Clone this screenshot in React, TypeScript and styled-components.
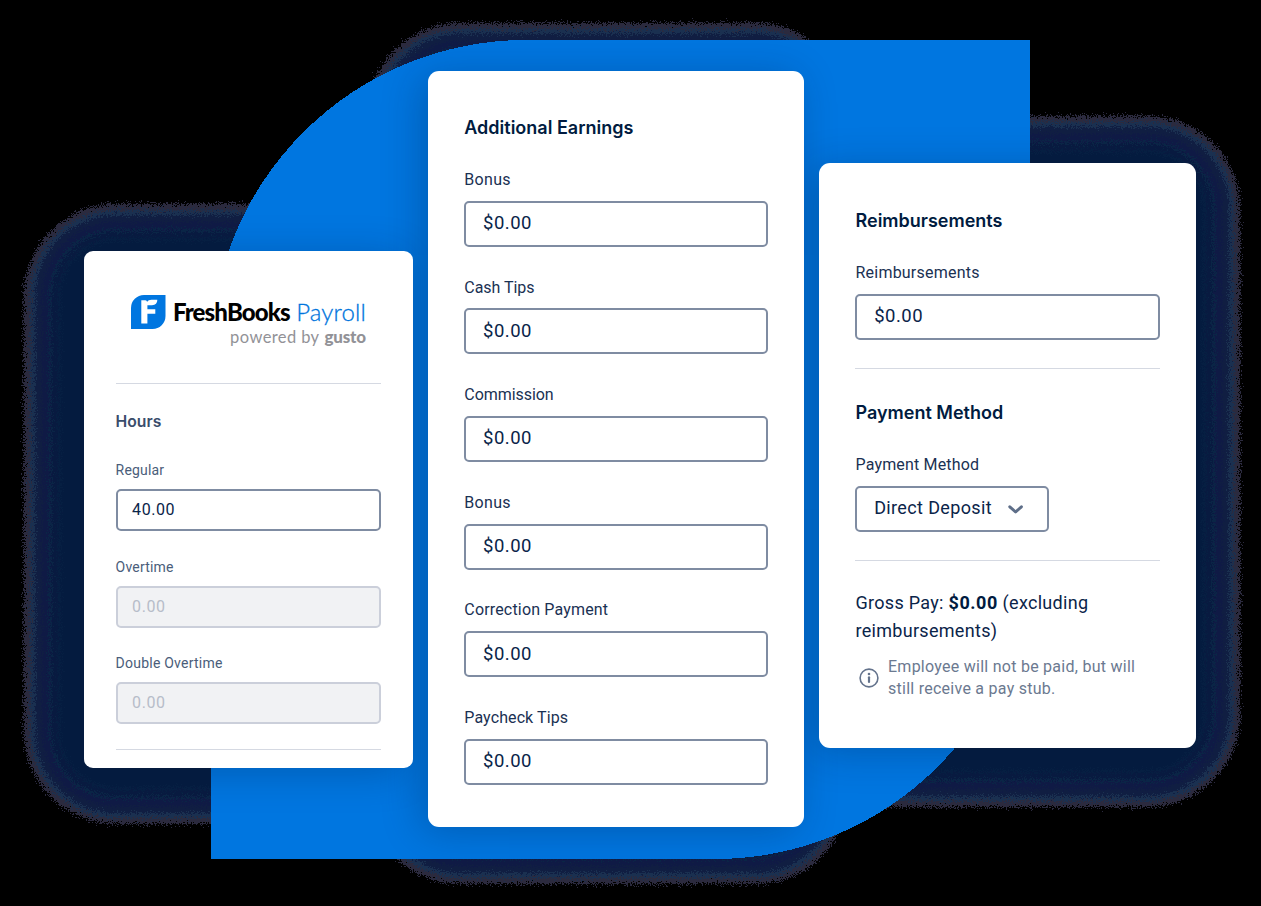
import React from 'react';
import styled, { createGlobalStyle, css } from 'styled-components';

const GlobalStyle = createGlobalStyle`
  *, *::before, *::after { box-sizing: border-box; }
  html, body { margin: 0; padding: 0; background: #000; overflow: hidden; }
`;

const Stage = styled.main`
  position: relative;
  width: 1261px;
  height: 906px;
  overflow: hidden;
  background: #000;
  font-family: Roboto, "Liberation Sans", sans-serif;
  color: #001b40;
`;

const BackdropSvg = styled.svg`
  position: absolute;
  inset: 0;
`;

const Columns = styled.div`
  position: relative;
  display: flex;
  align-items: flex-start;
  gap: 15.5px;
  padding-left: 84px;
`;

const Card = styled.section<{ $w: number; $h: number; $top: number; $pad: string; $radius: number }>`
  display: flex;
  flex-direction: column;
  flex: none;
  width: ${p => p.$w}px;
  height: ${p => p.$h}px;
  margin-top: ${p => p.$top}px;
  padding: ${p => p.$pad};
  border-radius: ${p => p.$radius}px;
  background: #fff;
`;

const Heading = styled.h2<{ $small?: boolean }>`
  margin: 0;
  height: 24px;
  padding-top: 1px;
  font: 600 ${p => (p.$small ? '15.7px' : '18px')} / 24px Inter, sans-serif;
  color: ${p => (p.$small ? '#3a4d6b' : '#001b40')};
`;

const Fields = styled.div<{ $gap: number; $top: number }>`
  display: flex;
  flex-direction: column;
  gap: ${p => p.$gap}px;
  margin-top: ${p => p.$top}px;
`;

const FieldBox = styled.label`
  display: flex;
  flex-direction: column;
`;

const Caption = styled.span<{ $small?: boolean; $track?: number }>`
  height: 20px;
  font-size: ${p => (p.$small ? 14 : 16)}px;
  line-height: 20px;
  letter-spacing: ${p => p.$track ?? 0.17}px;
  color: ${p => (p.$small ? '#4a5d7a' : '#1a3153')};
  white-space: nowrap;
`;

const Control = styled.span<{ $small?: boolean; $disabled?: boolean; $w?: number }>`
  display: flex;
  align-items: center;
  width: ${p => (p.$w ? `${p.$w}px` : '100%')};
  height: 46px;
  margin-top: 10.8px;
  padding: 0 0 1px 16.7px;
  border: 2px solid #7f8ca2;
  border-radius: 5px;
  background: #fff;
  color: #0a2449;
  font-size: 18.5px;
  line-height: 24px;
  letter-spacing: 0.5px;
  ${p => p.$small && css`
    height: 42px;
    margin-top: 9px;
    padding: 0 0 0 14.5px;
    font-size: 16px;
    letter-spacing: 0.55px;
  `}
  ${p => p.$disabled && css`
    border-color: #cbcfda;
    background: #f1f2f4;
    color: #b7bdc9;
  `}
`;

const SelectText = styled.span`
  width: 133px;
  font-size: 18px;
  letter-spacing: 0.36px;
`;

const Divider = styled.hr<{ $top: number }>`
  flex: none;
  width: 100%;
  height: 1px;
  margin: ${p => p.$top}px 0 0;
  border: 0;
  background: #d5d9e2;
`;

const Brand = styled.header`
  display: flex;
  justify-content: center;
  gap: 7px;
  height: 60px;
  padding-left: 0.5px;
`;

const BrandText = styled.div`
  display: flex;
  flex-direction: column;
  width: 193px;
`;

const BrandName = styled.div`
  display: flex;
  justify-content: space-between;
  height: 32px;
  font: 900 24px/34px Lato, sans-serif;
  letter-spacing: -0.85px;
  color: #000;
  white-space: nowrap;
`;

const Product = styled.span`
  font-weight: 300;
  letter-spacing: 0.15px;
  color: #0075dd;
  -webkit-text-stroke: 0.3px #0075dd;
`;

const Powered = styled.div`
  display: flex;
  justify-content: flex-end;
  gap: 5px;
  height: 20px;
  font: 400 16.5px/20px Lato, sans-serif;
  letter-spacing: 0.4px;
  color: #929297;
  white-space: nowrap;
`;

const Partner = styled.b`
  font-size: 17px;
  font-weight: 900;
  letter-spacing: -0.2px;
`;

const Gross = styled.p`
  margin: 28px 0 0;
  font-size: 18px;
  line-height: 28px;
  letter-spacing: 0.3px;
  color: #0a2449;
`;

const Amount = styled.b`
  font-weight: 700;
  letter-spacing: 0.55px;
  color: #001b40;
`;

const Note = styled.div`
  display: flex;
  align-items: center;
  gap: 9px;
  margin-top: 11px;
  padding-left: 3.5px;
  font-size: 16px;
  line-height: 22px;
  letter-spacing: 0.26px;
  color: #6b7990;
  white-space: nowrap;
`;

const halos = [
  { x: 24, y: 204, w: 372, h: 620 },
  { x: 368, y: 23, w: 480, h: 861 },
  { x: 760, y: 116, w: 480, h: 691 },
];

const haloBands = [
  [0, '#2b2a3e'], [6, '#1a3050'], [11, '#101e42'], [18, '#0f1a45'],
  [25, '#0a2546'], [28, '#081a40'], [34, '#061f42'], [37, '#041b3f'],
] as const;

const shadows = [
  { x: 84, y: 251, w: 328.7, h: 516.5 },
  { x: 428.2, y: 71, w: 375.7, h: 755.5 },
  { x: 819.4, y: 163.3, w: 376.2, h: 584.4 },
];

const blob = 'M526 40H1030V544A315 315 0 0 1 715 859H211V355A315 315 0 0 1 526 40Z';

function Backdrop() {
  return (
    <BackdropSvg width="1261" height="906" viewBox="0 0 1261 906" aria-hidden="true">
      <defs>
        <filter id="grain" filterUnits="userSpaceOnUse" x="0" y="0" width="1261" height="906" colorInterpolationFilters="sRGB">
          <feTurbulence type="fractalNoise" baseFrequency="0.8" numOctaves="2" seed="4" result="n" />
          <feDisplacementMap in="SourceGraphic" in2="n" scale="15" xChannelSelector="R" yChannelSelector="G" />
        </filter>
        <filter id="soft" filterUnits="userSpaceOnUse" x="-100" y="-100" width="1461" height="1106" colorInterpolationFilters="sRGB">
          <feGaussianBlur stdDeviation="20" />
        </filter>
        <clipPath id="blobClip"><path d={blob} /></clipPath>
      </defs>
      <g filter="url(#grain)" shapeRendering="crispEdges">
        {haloBands.map(([inset, fill]) =>
          halos.map(h => (
            <rect key={`${inset}-${h.x}`} x={h.x + inset} y={h.y + inset} width={h.w - inset * 2}
              height={h.h - inset * 2} rx={92 - inset} fill={fill} />
          )),
        )}
      </g>
      <path d={blob} fill="#0076e0" shapeRendering="crispEdges" />
      <g clipPath="url(#blobClip)">
        {shadows.map(s => (
          <rect key={s.x} x={s.x - 7} y={s.y + 5} width={s.w} height={s.h} rx="12"
            fill="#001b40" opacity="0.27" filter="url(#soft)" />
        ))}
      </g>
    </BackdropSvg>
  );
}

function Leaf() {
  return (
    <svg width="34.5" height="34" viewBox="0 0 34.5 34" aria-hidden="true">
      <path d="M0 34V13A13 13 0 0 1 13 0H34.5V21A13 13 0 0 1 21.5 34Z" fill="#0076e0" />
      <path d="M10.3 5.2H14.3C15.4 5.2 16 5.9 16 7.1C17 5.5 18.4 4.8 20.5 4.8H26.3C26.3 8 24.6 10.2 21 10.2H16.4V14.3H24.3V18.8H16.4V28.6H10.3Z" fill="#fff" />
    </svg>
  );
}

type FieldProps = { label: string; value: string; small?: boolean; disabled?: boolean; track?: number };

function Field({ label, value, small, disabled, track }: FieldProps) {
  return (
    <FieldBox>
      <Caption $small={small} $track={track}>{label}</Caption>
      <Control $small={small} $disabled={disabled}>{value}</Control>
    </FieldBox>
  );
}

const earnings: [string, number][] = [
  ['Bonus', 0.3], ['Cash Tips', -0.05], ['Commission', -0.05], ['Bonus', 0.3],
  ['Correction Payment', 0.17], ['Paycheck Tips', 0.1],
];

export default function App() {
  return (
    <Stage>
      <GlobalStyle />
      <Backdrop />
      <Columns>
        <Card $w={328.8} $h={516.5} $top={251} $pad="44px 31.6px 0" $radius={9}>
          <Brand>
            <Leaf />
            <BrandText>
              <BrandName>FreshBooks<Product>Payroll</Product></BrandName>
              <Powered>powered by<Partner>gusto</Partner></Powered>
            </BrandText>
          </Brand>
          <Divider $top={28} />
          <Fields $gap={0} $top={25}><Heading $small>Hours</Heading></Fields>
          <Fields $gap={25.7} $top={27}>
            <Field small label="Regular" value="40.00" />
            <Field small disabled label="Overtime" value="0.00" track={0.2} />
            <Field small disabled label="Double Overtime" value="0.00" track={0.23} />
          </Fields>
          <Divider $top={24.5} />
        </Card>
        <Card $w={375.7} $h={755.5} $top={71} $pad="44px 36px 0" $radius={11}>
          <Heading>Additional Earnings</Heading>
          <Fields $gap={30.8} $top={31}>
            {earnings.map(([label, track], i) => (
              <Field key={i} label={label} value="$0.00" track={track} />
            ))}
          </Fields>
        </Card>
        <Card $w={376.2} $h={584.4} $top={163.3} $pad="44.5px 36px 0" $radius={11}>
          <Heading>Reimbursements</Heading>
          <Fields $gap={0} $top={31}>
            <Field label="Reimbursements" value="$0.00" track={0.22} />
          </Fields>
          <Divider $top={28} />
          <Fields $gap={0} $top={31.6}><Heading>Payment Method</Heading></Fields>
          <Fields $gap={0} $top={31}>
            <FieldBox>
              <Caption>Payment Method</Caption>
              <Control $w={193.5}>
                <SelectText>Direct Deposit</SelectText>
                <svg width="18" height="14" viewBox="0 0 18 14" fill="none" stroke="#5e6e88" strokeWidth="3" strokeLinecap="round" strokeLinejoin="round">
                  <path d="M2.8 5.8L8.6 11L14.4 5.8" />
                </svg>
              </Control>
            </FieldBox>
          </Fields>
          <Divider $top={28} />
          <Gross>Gross Pay: <Amount>$0.00</Amount> (excluding reimbursements)</Gross>
          <Note>
            <svg width="20" height="20" viewBox="0 0 20 20" fill="none" stroke="#64738c" strokeLinecap="round">
              <circle cx="10" cy="10" r="8.9" strokeWidth="1.6" />
              <path d="M10 9.3V14" strokeWidth="2.2" />
              <circle cx="10" cy="6" r="1.3" fill="#64738c" stroke="none" />
            </svg>
            <span>Employee will not be paid, but will<br />still receive a pay stub.</span>
          </Note>
        </Card>
      </Columns>
    </Stage>
  );
}
